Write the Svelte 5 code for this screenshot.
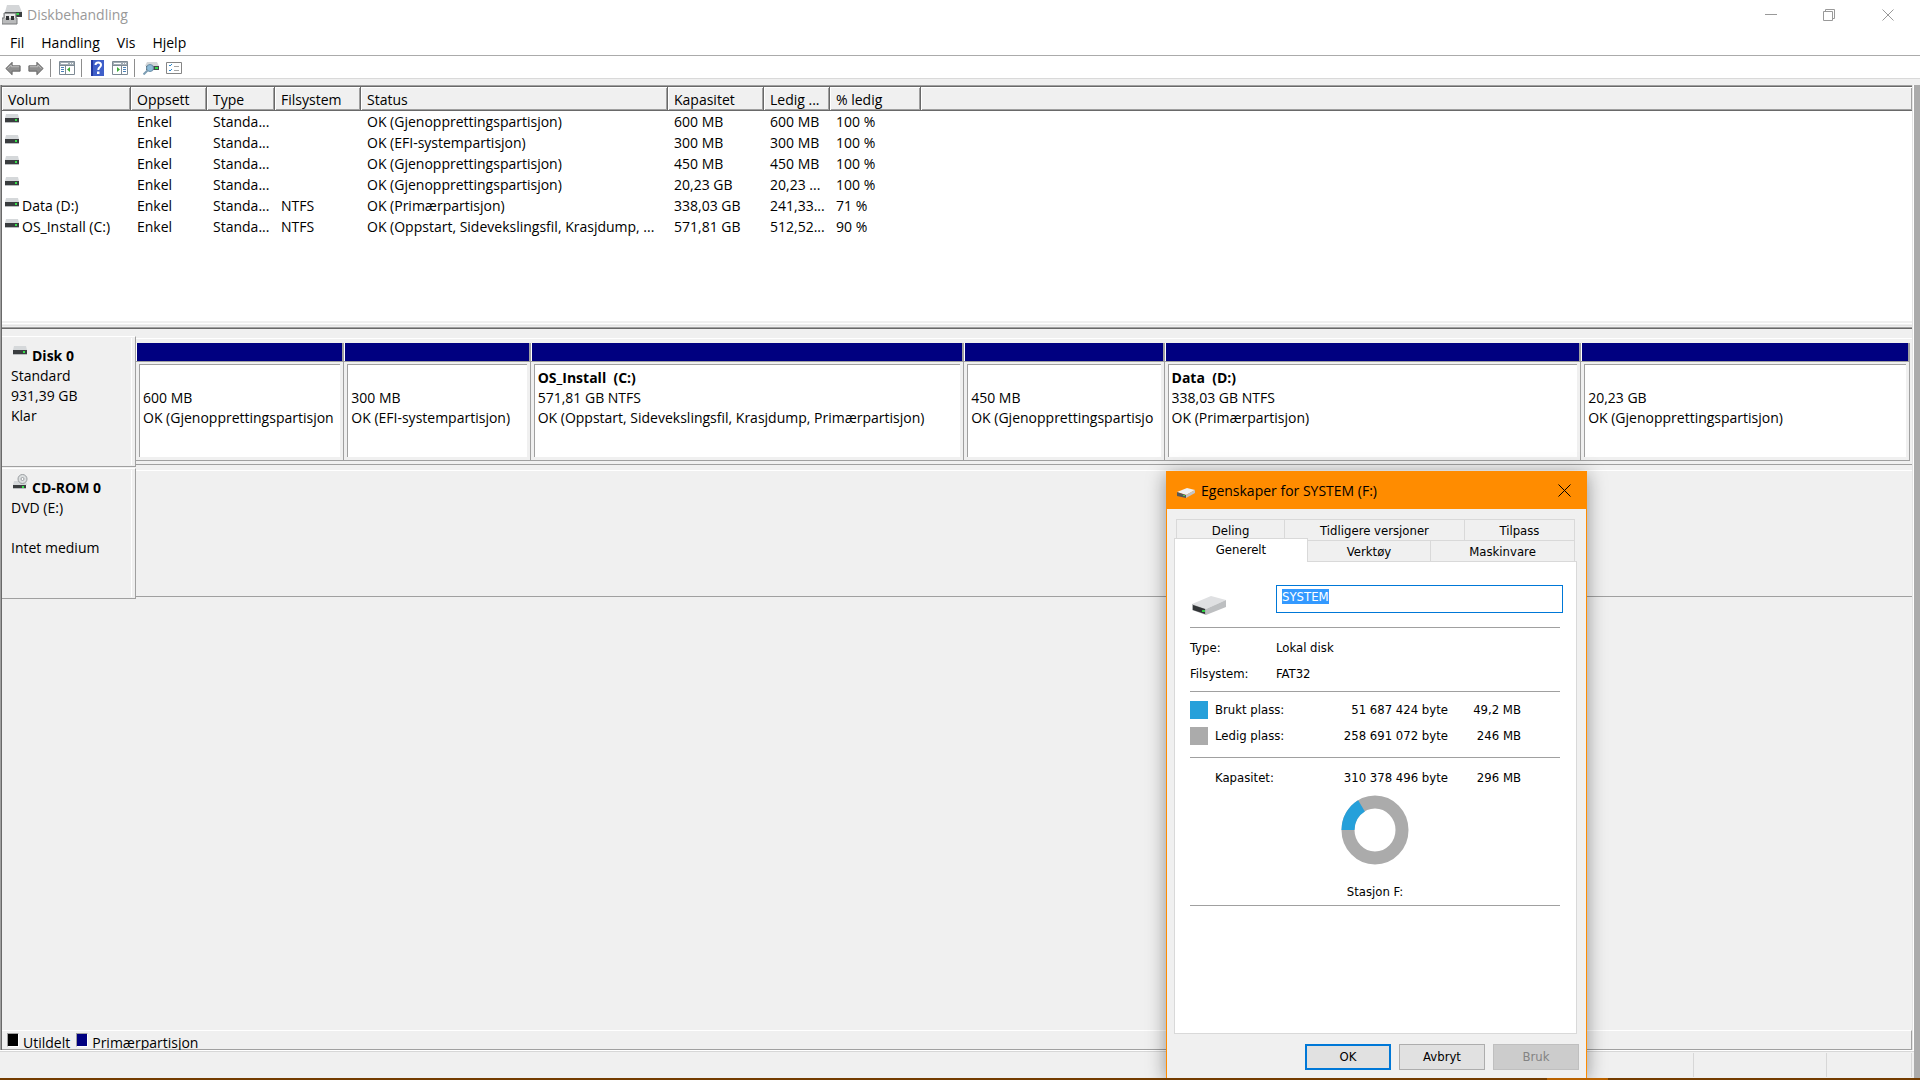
<script>
  import { onMount } from 'svelte';

  const menus = ['Fil', 'Handling', 'Vis', 'Hjelp'];

  const columns = [
    { label: 'Volum', width: 129 },
    { label: 'Oppsett', width: 76 },
    { label: 'Type', width: 68 },
    { label: 'Filsystem', width: 86 },
    { label: 'Status', width: 307 },
    { label: 'Kapasitet', width: 96 },
    { label: 'Ledig ...', width: 66 },
    { label: '% ledig', width: 91 }
  ];

  const volumes = [
    ['', 'Enkel', 'Standa...', '', 'OK (Gjenopprettingspartisjon)', '600 MB', '600 MB', '100 %'],
    ['', 'Enkel', 'Standa...', '', 'OK (EFI-systempartisjon)', '300 MB', '300 MB', '100 %'],
    ['', 'Enkel', 'Standa...', '', 'OK (Gjenopprettingspartisjon)', '450 MB', '450 MB', '100 %'],
    ['', 'Enkel', 'Standa...', '', 'OK (Gjenopprettingspartisjon)', '20,23 GB', '20,23 ...', '100 %'],
    ['Data (D:)', 'Enkel', 'Standa...', 'NTFS', 'OK (Primærpartisjon)', '338,03 GB', '241,33...', '71 %'],
    ['OS_Install (C:)', 'Enkel', 'Standa...', 'NTFS', 'OK (Oppstart, Sidevekslingsfil, Krasjdump, ...', '571,81 GB', '512,52...', '90 %']
  ];

  // share = relative width in the graphical view
  const partitions = [
    { share: 208, name: '', size: '600 MB', status: 'OK (Gjenopprettingspartisjon' },
    { share: 186, name: '', size: '300 MB', status: 'OK (EFI-systempartisjon)' },
    { share: 434, name: 'OS_Install  (C:)', size: '571,81 GB NTFS', status: 'OK (Oppstart, Sidevekslingsfil, Krasjdump, Primærpartisjon)' },
    { share: 200, name: '', size: '450 MB', status: 'OK (Gjenopprettingspartisjo' },
    { share: 417, name: 'Data  (D:)', size: '338,03 GB NTFS', status: 'OK (Primærpartisjon)' },
    { share: 329, name: '', size: '20,23 GB', status: 'OK (Gjenopprettingspartisjon)' }
  ];

  let volumeName = $state('SYSTEM');
  let nameInput;

  onMount(() => {
    nameInput.focus();
    nameInput.select();
  });
</script>

{#snippet driveIcon()}
  <svg class="drive" width="14" height="9" viewBox="0 0 14 9" aria-hidden="true">
    <path d="M1 0h12l1 4H0z" fill="#d5d8da" />
    <path d="M0 4h14v4H0z" fill="#3a3d3f" />
    <path d="M0 8h14v1H0z" fill="#b9bcbe" />
    <path d="M10 5h2v2h-2z" fill="#35e04a" />
  </svg>
{/snippet}

<div class="desktop">
  <div class="window">
    <header class="titlebar">
      <svg width="20" height="20" viewBox="0 0 20 20" aria-hidden="true">
        <path d="M5 0h12l3 7H3z" fill="#d4d6d8" />
        <path d="M3 7h17v5H3z" fill="#3d4042" />
        <path d="M14 8h3v2h-3z" fill="#35d84a" />
        <path d="M2 8h12v5h1v6H0v-6h2z" fill="#b9babb" stroke="#77797b" />
        <path d="M3 9h10v4H3z" fill="#e8e8e8" />
        <path d="M4 11h3v4H4zM9 11h3v4H9z" fill="#303234" />
      </svg>
      <h1>Diskbehandling</h1>
      <div class="window-buttons">
        <button aria-label="Minimer"><svg width="12" height="12" viewBox="0 0 12 12"><path d="M0 5.500h12" /></svg></button>
        <button aria-label="Gjenopprett"><svg width="12" height="12" viewBox="0 0 12 12"><path d="M.5 2.500h9v9h-9zM2.500 2.500v-2h9v9h-2" /></svg></button>
        <button aria-label="Lukk"><svg width="12" height="12" viewBox="0 0 12 12"><path d="M.5.5l11 11M11.500.5l-11 11" /></svg></button>
      </div>
    </header>

    <nav class="menubar">
      {#each menus as menu}
        <button>{menu}</button>
      {/each}
    </nav>

    <div class="toolbar">
      <button aria-label="Tilbake">
        <svg width="16" height="15" viewBox="0 0 18 16"><path d="M1 8l7-7v4h9v6H8v4z" fill="#8f8f8f" stroke="#5c5c5c" /><path d="M3 8l4-4v2h9" fill="none" stroke="#c4c4c4" /></svg>
      </button>
      <button aria-label="Frem">
        <svg width="16" height="15" viewBox="0 0 18 16"><path d="M17 8l-7-7v4H1v6h9v4z" fill="#8f8f8f" stroke="#5c5c5c" /><path d="M2 6h9V4l4 4" fill="none" stroke="#c4c4c4" /></svg>
      </button>
      <i class="separator"></i>
      <button aria-label="Vis eller skjul konsolltre">
        <svg width="16" height="14" viewBox="0 0 16 14"><path d="M.5.5h15v13H.5z" fill="#fff" stroke="#7e8a94" /><path d="M1 1h14v3H1z" fill="#a3adb5" /><path d="M2 2.500h7M11 2.500h1M13 2.500h1" stroke="#fff" /><path d="M1 4.500h14M6.500 4v9" stroke="#7e8a94" /><path d="M2 6.500h3M2 8.500h3M2 10.500h3" stroke="#4b82b8" /><path d="M11 6v5L8 8.500z" fill="#3cac35" /></svg>
      </button>
      <i class="separator"></i>
      <button class="help" aria-label="Hjelp">
        <svg width="13" height="16" viewBox="0 0 13 16"><path d="M0 0h13v16H0z" fill="#3f5fc9" /><path d="M0 0h2v16H0z" fill="#2238a0" /><path d="M4.500 5C4.500 1.500 10 1.500 10 5c0 2.500-2.700 2.200-2.700 5" fill="none" stroke="#fff" stroke-width="2" /><path d="M6 11.500h2.500V14H6z" fill="#fff" /></svg>
      </button>
      <button aria-label="Vis eller skjul handlingsrute">
        <svg width="16" height="14" viewBox="0 0 16 14"><path d="M.5.5h15v13H.5z" fill="#fff" stroke="#7e8a94" /><path d="M1 1h14v3H1z" fill="#a3adb5" /><path d="M2 2.500h7M11 2.500h1M13 2.500h1" stroke="#fff" /><path d="M1 4.500h14M9.500 4v9" stroke="#7e8a94" /><path d="M11 6.500h3M11 8.500h3M11 10.500h3" stroke="#4b82b8" /><path d="M5 6v5l3-2.500z" fill="#3cac35" /></svg>
      </button>
      <i class="separator"></i>
      <button aria-label="Oppdater">
        <svg width="16" height="13" viewBox="0 0 16 13"><path d="M4 0h10l2 4H2z" fill="#d3d6d8" /><path d="M3 4h13v4H3z" fill="#44484b" /><path d="M12 5h3v2h-3z" fill="#35d84a" /><circle cx="7" cy="6" r="3.500" fill="#8dbbd8" stroke="#6c8ea5" /><path d="M4.500 8.500L.5 12.500" stroke="#7d9db3" stroke-width="2" /></svg>
      </button>
      <button aria-label="Egenskaper">
        <svg width="16" height="12" viewBox="0 0 16 12"><path d="M.5.5h15v11H.5z" fill="#fff" stroke="#858585" /><path d="M3 3l1 1 2-2M3 8l1 1 2-2" fill="none" stroke="#2c8ad0" /><path d="M8 4.500h5M8 8.500h5" stroke="#a5a5a5" /></svg>
      </button>
    </div>

    <main class="content">
      <section class="volume-list">
        <table>
          <colgroup>
            {#each columns as column}
              <col style="width: {column.width}px" />
            {/each}
            <col />
          </colgroup>
          <thead>
            <tr>
              {#each columns as column}
                <th scope="col">{column.label}</th>
              {/each}
              <td class="filler"></td>
            </tr>
          </thead>
          <tbody>
            {#each volumes as volume}
              <tr>
                {#each volume as value, i}
                  {#if i === 0}
                    <td class="name">{@render driveIcon()}{value}</td>
                  {:else}
                    <td>{value}</td>
                  {/if}
                {/each}
                <td></td>
              </tr>
            {/each}
          </tbody>
        </table>
      </section>
      <div class="splitter"></div>

      <section class="disks">
        <div class="disk">
          <div class="disk-label">
            <h2>{@render driveIcon()}Disk 0</h2>
            <p>Standard</p>
            <p>931,39 GB</p>
            <p>Klar</p>
          </div>
          <div class="graph">
            {#each partitions as part}
              <div class="partition" style="flex-grow: {part.share}">
                <div class="bar"></div>
                <div class="box">
                  <strong>{part.name}</strong>
                  <p>{part.size}</p>
                  <p>{part.status}</p>
                </div>
              </div>
            {/each}
          </div>
        </div>
        <div class="disk">
          <div class="disk-label">
            <h2>
              <svg class="cdrom" width="15" height="16" viewBox="0 0 15 16" aria-hidden="true">
                <path d="M1 7h12l1 4H0z" fill="#d5d8da" />
                <circle cx="9.500" cy="5" r="4.500" fill="#dcdfe0" stroke="#9a9ea1" />
                <circle cx="9.500" cy="5" r="1.500" fill="#fff" stroke="#9a9ea1" />
                <path d="M0 11h13v3H0z" fill="#3a3d3f" />
                <path d="M0 14h13v1H0z" fill="#b9bcbe" />
                <path d="M9 12h2v2H9z" fill="#35e04a" />
              </svg>CD-ROM 0
            </h2>
            <p>DVD (E:)</p>
            <p></p>
            <p>Intet medium</p>
          </div>
          <div class="graph"></div>
        </div>
      </section>

      <footer class="legend">
        <i class="swatch unallocated"></i><span>Utildelt</span>
        <i class="swatch primary"></i><span>Primærpartisjon</span>
      </footer>
    </main>

    <div class="statusbar">
      <i></i><i></i><i></i>
    </div>
    <div class="taskbar"></div>
  </div>

  <div class="dialog" role="dialog" aria-labelledby="dialog-title">
    <header class="dialog-title">
      <svg width="20" height="12" viewBox="0 0 20 12" aria-hidden="true">
        <path d="M1 6l10-4 8 2-9 5z" fill="#f1f1f1" />
        <path d="M1 6l9 3v3L1 10z" fill="#55585a" />
        <path d="M10 9l9-5v3l-9 5z" fill="#c2c4c6" />
        <path d="M7 9h2v1H7z" fill="#46d355" />
      </svg>
      <h2 id="dialog-title">Egenskaper for SYSTEM (F:)</h2>
      <button aria-label="Lukk"><svg width="13" height="13" viewBox="0 0 13 13"><path d="M.5.5l12 12M12.500.5l-12 12" /></svg></button>
    </header>

    <div class="dialog-body">
      <div class="tabs" role="tablist">
        <div class="tab-row back">
          <button role="tab" aria-selected="false" style="flex-grow: 108">Deling</button>
          <button role="tab" aria-selected="false" style="flex-grow: 180">Tidligere versjoner</button>
          <button role="tab" aria-selected="false" style="flex-grow: 110">Tilpass</button>
        </div>
        <div class="tab-row">
          <button role="tab" aria-selected="true" class="active" style="flex-grow: 133">Generelt</button>
          <button role="tab" aria-selected="false" style="flex-grow: 123">Verktøy</button>
          <button role="tab" aria-selected="false" style="flex-grow: 144">Maskinvare</button>
        </div>
      </div>

      <div class="page" role="tabpanel">
        <div class="name-row">
          <svg width="34" height="20" viewBox="0 0 34 20" aria-hidden="true">
            <path d="M0 8L19 0l15 4-20 9z" fill="#dfe0e2" />
            <path d="M0 8l14 5v6L0 14z" fill="#aeb1b3" />
            <path d="M1 9l12 4v5L1 14z" fill="#323537" />
            <path d="M14 13l20-9v7l-20 8z" fill="#bdbfc1" />
            <path d="M10 14h3v2h-3z" fill="#2fcf44" />
          </svg>
          <input type="text" aria-label="Volumnavn" spellcheck="false" bind:value={volumeName} bind:this={nameInput} />
        </div>
        <hr />
        <dl class="facts">
          <dt>Type:</dt>
          <dd>Lokal disk</dd>
          <dt>Filsystem:</dt>
          <dd>FAT32</dd>
        </dl>
        <hr />
        <div class="usage">
          <i class="used"></i><span>Brukt plass:</span><b>51 687 424 byte</b><b>49,2 MB</b>
          <i class="free"></i><span>Ledig plass:</span><b>258 691 072 byte</b><b>246 MB</b>
        </div>
        <hr />
        <div class="usage total">
          <i></i><span>Kapasitet:</span><b>310 378 496 byte</b><b>296 MB</b>
        </div>
        <div class="chart">
          <svg width="68" height="70" viewBox="0 0 68 70" aria-hidden="true">
            <ellipse cx="34" cy="35" rx="27" ry="28" fill="none" stroke="#ababab" stroke-width="13" />
            <path d="M7 35A27 28 0 0 1 20.500 10.800" fill="none" stroke="#26a0da" stroke-width="13" />
          </svg>
          <p>Stasjon F:</p>
        </div>
        <hr />
      </div>

      <div class="actions">
        <button class="default">OK</button>
        <button>Avbryt</button>
        <button disabled>Bruk</button>
      </div>
    </div>
  </div>
</div>

<style>
  :global(body) {
    margin: 0;
    background: #f0f0f0;
  }

  .desktop {
    position: relative;
    overflow: hidden;
    font: 14px/20px 'Segoe UI', 'Open Sans', 'Noto Sans', sans-serif;
    color: #000;
  }

  .desktop *,
  .desktop *::after {
    box-sizing: border-box;
  }

  h1,
  h2,
  p,
  dl,
  dd {
    margin: 0;
    font-size: inherit;
    font-weight: inherit;
  }

  button {
    padding: 0;
    border: 0;
    background: none;
    font: inherit;
    color: inherit;
  }

  svg {
    display: block;
    flex: none;
  }

  .window {
    display: flex;
    flex-direction: column;
    min-height: 100vh;
    background: #f0f0f0;
  }

  .titlebar {
    display: flex;
    align-items: center;
    height: 30px;
    padding-left: 2px;
    background: #fff;
    color: #999;
  }

  .titlebar h1 {
    flex: 1;
    padding-left: 5px;
  }

  .window-buttons {
    display: flex;
  }

  .window-buttons button {
    display: grid;
    place-items: center;
    width: 58px;
    height: 28px;
  }

  .window-buttons button:last-child {
    width: 62px;
    padding-right: 2px;
  }

  .window-buttons path {
    fill: none;
    stroke: #999;
  }

  .menubar {
    display: flex;
    height: 26px;
    gap: 17px;
    padding: 0 10px;
    border-bottom: 1px solid #ababab;
    background: #fff;
  }

  .toolbar {
    display: flex;
    align-items: center;
    gap: 7px;
    height: 23px;
    padding: 2px 5px 0;
    border-bottom: 1px solid #d9d9d9;
    background: #fff;
  }

  .separator {
    width: 1px;
    height: 18px;
    margin: 0 1px 0 -1px;
    background: #8d8d8d;
  }

  .help {
    padding: 0 1px;
  }

  .content {
    flex: 1;
    display: flex;
    flex-direction: column;
    margin-top: 6px;
    padding-left: 1px;
    border-left: 1px solid #a0a0a0;
    border-right: 6px solid #ababab;
    box-shadow: inset 1px 0 #696969, inset -1px 0 #fff, inset -2px 0 #e3e3e3;
  }

  .volume-list {
    min-height: 236px;
    margin-right: 2px;
    border-top: 1px solid #a0a0a0;
    background: #fff;
    box-shadow: inset 0 1px #696969;
    padding-top: 1px;
  }

  table {
    width: 100%;
    border-collapse: separate;
    border-spacing: 0;
    table-layout: fixed;
  }

  th,
  .filler {
    height: 24px;
    padding: 2px 0 0 6px;
    border-bottom: 1px solid #696969;
    border-right: 1px solid #696969;
    background: #f0f0f0;
    box-shadow: inset 1px 1px #fff, inset -1px -1px #a0a0a0;
    font-weight: 400;
    text-align: left;
  }

  .filler {
    border-right: 0;
  }

  tbody td {
    height: 21px;
    padding: 0 0 0 6px;
    white-space: nowrap;
    overflow: hidden;
  }

  tbody .name {
    padding-left: 3px;
  }

  .name .drive {
    display: inline-block;
    margin-right: 3px;
    vertical-align: 4px;
  }

  .splitter {
    height: 8px;
    margin: 0 2px 7px 0;
    border-bottom: 1px solid #696969;
    box-shadow: inset 0 -1px #a0a0a0, inset 0 -2px #f0f0f0, inset 0 -3px #e3e3e3, inset 0 -4px #f0f0f0, inset 0 -5px #fff;
  }

  .disks {
    flex: 1;
    margin-right: 2px;
  }

  .disk {
    display: flex;
    margin-bottom: 1px;
  }

  .disk-label {
    position: relative;
    flex: none;
    width: 134px;
    height: 131px;
    padding: 9px 0 0 9px;
    border: 1px solid #a0a0a0;
    border-top-color: #fff;
    border-left: 0;
  }

  .disk-label::after {
    content: '';
    position: absolute;
    top: 1px;
    right: 3px;
    bottom: 1px;
    width: 1px;
    background: #fff;
  }

  .disk-label h2 {
    display: flex;
    font-weight: 700;
  }

  .disk-label p {
    min-height: 20px;
  }

  .disk-label .drive {
    margin: 0 5px 0 2px;
  }

  .disk-label .cdrom {
    margin: -4px 4px 0 2px;
  }

  .graph {
    flex: 1 1 0;
    min-width: 0;
    display: flex;
    margin: 2px 0;
    padding: 4px 2px 3px 0;
    border-top: 1px solid #fff;
    border-bottom: 1px solid #a0a0a0;
  }

  .partition {
    flex: 1 1 0;
    min-width: 0;
    display: flex;
    flex-direction: column;
    border-right: 1px solid #a0a0a0;
    border-bottom: 1px solid #a0a0a0;
  }

  .bar {
    height: 19px;
    border: solid #a0a0a0;
    border-width: 0 1px 1px 0;
    background: #000080;
    box-shadow: inset 1px 0 #fff;
  }

  .box {
    flex: 1;
    margin: 2px 3px 3px;
    padding: 3px 3px 0;
    border-top: 1px solid #a0a0a0;
    border-left: 1px solid #a0a0a0;
    background: #fff;
    overflow: hidden;
    white-space: nowrap;
  }

  .box p {
    overflow: hidden;
  }

  .box strong {
    display: block;
    min-height: 20px;
    white-space: pre;
  }

  .legend {
    display: flex;
    height: 20px;
    margin-right: 2px;
    padding-left: 5px;
    border: 1px solid #a0a0a0;
    border-top-color: #fff;
    border-left: 0;
    line-height: 24px;
  }

  .swatch {
    width: 12px;
    height: 14px;
    margin-top: 2px;
    border: 1px solid #a0a0a0;
    border-right-color: #fff;
    border-bottom-color: #fff;
  }

  .unallocated {
    background: #000;
  }

  .primary {
    background: #000080;
  }

  .legend span {
    padding: 0 6px 0 4px;
    background: #f0f0f0;
  }

  .statusbar {
    display: flex;
    justify-content: flex-end;
    height: 28px;
    padding-top: 3px;
    border-right: 6px solid #ababab;
    box-shadow: inset 0 1px #fff, inset 0 2px #d7d7d7;
  }

  .statusbar i {
    width: 133px;
    margin-bottom: 1px;
    border-right: 1px solid #d7d7d7;
  }

  .statusbar i:last-child {
    width: 85px;
    margin-right: 2px;
  }

  .taskbar {
    height: 2px;
    background: linear-gradient(90deg, #733c00 1547px, #b96200 1547px, #b96200 1608px, #733c00 1608px);
  }

  /* Properties window, floating over the console */
  .dialog {
    position: absolute;
    top: 471px;
    left: 1166px;
    width: 421px;
    border: 1px solid #ff8c00;
    border-bottom: 0;
    background: #f0f0f0;
    box-shadow: 0 3px 18px rgba(0, 0, 0, 0.4);
    clip-path: inset(-24px -24px 0);
  }

  .dialog-title {
    display: flex;
    align-items: center;
    height: 37px;
    padding: 0 15px 0 9px;
    background: #ff8c00;
  }

  .dialog-title > svg {
    margin-top: 3px;
  }

  .dialog-title h2 {
    flex: 1;
    padding-left: 5px;
  }

  .dialog-title button path {
    fill: none;
    stroke: #000;
  }

  .dialog-body {
    padding: 10px 9px 8px 7px;
    font: 13px/16px Tahoma, 'DejaVu Sans Condensed', 'DejaVu Sans', sans-serif;
  }

  .tab-row {
    display: flex;
    height: 21px;
    padding-right: 2px;
  }

  .tab-row.back {
    padding-left: 2px;
  }

  .tab-row button {
    flex: 1 1 0;
    padding-top: 1px;
    border: solid #d9d9d9;
    border-width: 1px 1px 0 0;
  }

  .tab-row.back button:first-child {
    border-left-width: 1px;
  }

  .tab-row .active {
    position: relative;
    height: 24px;
    margin-top: -2px;
    padding-bottom: 2px;
    border-left-width: 1px;
    background: #fff;
  }

  .page {
    min-height: 473px;
    padding: 23px 16px 0 15px;
    border: 1px solid #d9d9d9;
    background: #fff;
  }

  .name-row {
    display: flex;
    align-items: flex-end;
    gap: 50px;
    height: 28px;
    padding-left: 2px;
    margin-bottom: 14px;
  }

  .name-row svg {
    margin-bottom: -3px;
  }

  .name-row input {
    flex: 1;
    min-width: 0;
    height: 28px;
    margin-right: -3px;
    padding: 2px 5px 8px;
    border: 1px solid #0078d7;
    outline: 0;
    font: inherit;
  }

  .name-row input::selection {
    background: #3399ff;
    color: #fff;
  }

  hr {
    height: 1px;
    margin: 0;
    border: 0;
    background: #a0a0a0;
  }

  .facts {
    display: grid;
    grid-template-columns: 86px 1fr;
    row-gap: 10px;
    padding: 12px 0 9px;
  }

  .usage {
    display: grid;
    grid-template-columns: 18px 78px 162px 73px;
    gap: 8px 0;
    align-items: center;
    padding: 9px 0 12px;
  }

  .usage i {
    height: 18px;
  }

  .usage .used {
    background: #26a0da;
  }

  .usage .free {
    background: #ababab;
  }

  .usage span {
    padding-left: 7px;
    white-space: nowrap;
  }

  .usage b {
    font-weight: 400;
    text-align: right;
  }

  .usage.total {
    padding: 11px 0 8px;
  }

  .chart {
    display: flex;
    flex-direction: column;
    align-items: center;
    gap: 19px;
    padding-bottom: 5px;
  }

  .actions {
    display: flex;
    justify-content: flex-end;
    gap: 8px;
    padding-top: 10px;
    margin-right: -2px;
  }

  .actions button {
    width: 86px;
    height: 26px;
    border: 1px solid #adadad;
    background: #e1e1e1;
  }

  .actions .default {
    border: 2px solid #0078d7;
  }

  .actions button:disabled {
    border-color: #bfbfbf;
    background: #ccc;
    color: #838383;
  }
</style>
